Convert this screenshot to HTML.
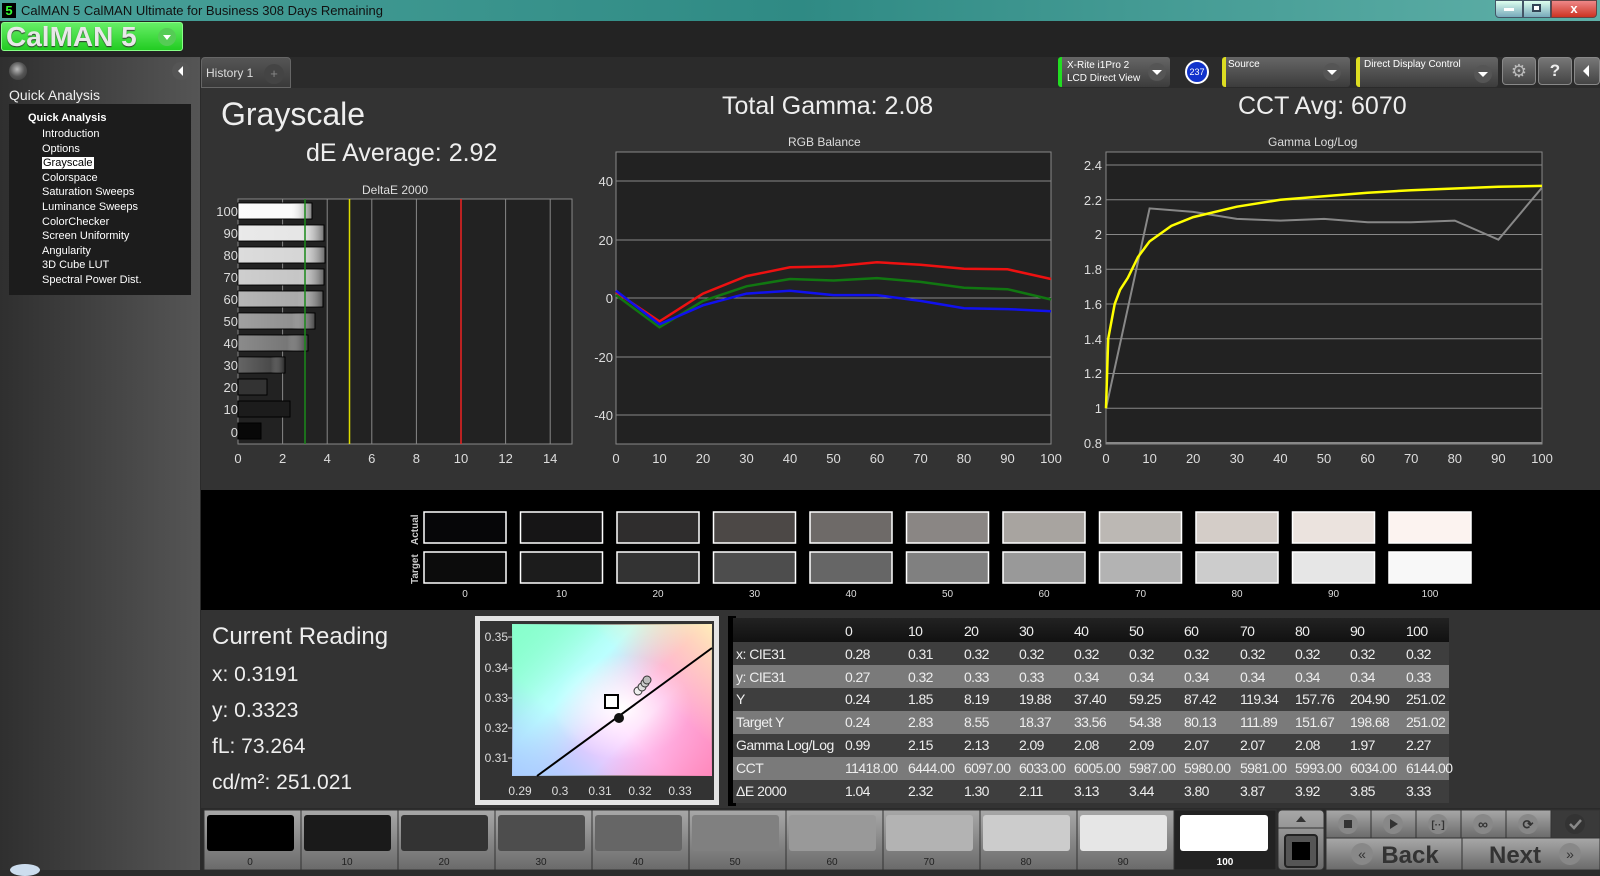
<!DOCTYPE html><html><head><meta charset="utf-8"><style>
*{margin:0;padding:0;box-sizing:border-box}
body{width:1600px;height:870px;overflow:hidden;background:#2b2b2b;font-family:"Liberation Sans",sans-serif;position:relative;color:#eee}
.a{position:absolute}
.t{white-space:nowrap}
</style></head><body>
<div class="a" style="left:0;top:0;width:1600px;height:21px;background:linear-gradient(90deg,#4aa29a,#2f8a84 50%,#5fb0a8)"></div>
<div class="a" style="left:2px;top:3px;width:14px;height:15px;background:#000;color:#3f3;font:bold 13px 'Liberation Sans';text-align:center;line-height:15px">5</div>
<div class="a t" style="left:21px;top:3px;font-size:13px;color:#111">CalMAN 5 CalMAN Ultimate for Business 308 Days Remaining</div>
<div class="a" style="left:1495px;top:0;width:28px;height:18px;background:linear-gradient(#dfe,#7ab);border:1px solid #456;border-radius:0 0 0 4px"></div>
<div class="a" style="left:1504px;top:8px;width:10px;height:3px;background:#fff"></div>
<div class="a" style="left:1523px;top:0;width:28px;height:18px;background:linear-gradient(#dfe,#7ab);border:1px solid #456"></div>
<div class="a" style="left:1532px;top:4px;width:9px;height:8px;border:2px solid #345;background:#fff"></div>
<div class="a" style="left:1551px;top:0;width:46px;height:18px;background:linear-gradient(#e88,#c32);border:1px solid #644;border-radius:0 0 4px 0;color:#fff;font:bold 13px sans-serif;text-align:center;line-height:16px">x</div>
<div class="a" style="left:0;top:21px;width:1600px;height:36px;background:#232323"></div>
<div class="a" style="left:1px;top:22px;width:182px;height:29px;background:linear-gradient(#6e6,#2c2);border-radius:3px;border:1px solid #8f8"></div>
<div class="a t" style="left:6px;top:21px;font:bold 28px 'Liberation Sans';color:#e8e8e8;text-shadow:0 1px 1px #333">CalMAN 5</div>
<div class="a" style="left:158px;top:28px;width:18px;height:18px;border-radius:50%;background:#5c5"></div>
<div class="a" style="left:163px;top:35px;border-left:4px solid transparent;border-right:4px solid transparent;border-top:5px solid #fff"></div>
<div class="a" style="left:0;top:57px;width:200px;height:813px;background:linear-gradient(90deg,#2f2f2f,#4a4a4a 70%,#555)"></div>
<div class="a" style="left:9px;top:62px;width:18px;height:18px;border-radius:50%;background:radial-gradient(circle at 45% 40%,#bbb,#555 50%,#333)"></div>
<div class="a" style="left:172px;top:62px;width:18px;height:18px;border-radius:50%;background:#555"></div>
<div class="a" style="left:178px;top:66px;border-top:5px solid transparent;border-bottom:5px solid transparent;border-right:5px solid #fff"></div>
<div class="a t" style="left:9px;top:87px;font-size:14px;color:#eee">Quick Analysis</div>
<div class="a" style="left:9px;top:104px;width:182px;height:191px;background:#1c1c1c"></div>
<div class="a t" style="left:28px;top:112px;font-size:11px;font-weight:bold;color:#fff">Quick Analysis</div>
<div class="a" style="left:42px;top:127px;font-size:11px;line-height:14.6px;color:#fff">Introduction<br>Options<br><span style="background:#fff;color:#000;padding:0 1px">Grayscale</span><br>Colorspace<br>Saturation Sweeps<br>Luminance Sweeps<br>ColorChecker<br>Screen Uniformity<br>Angularity<br>3D Cube LUT<br>Spectral Power Dist.</div>
<div class="a" style="left:201px;top:57px;width:90px;height:31px;background:linear-gradient(#555,#3a3a3a);border:1px solid #666;border-radius:4px 4px 0 0"></div>
<div class="a t" style="left:206px;top:66px;font-size:12px;color:#ddd">History 1</div>
<div class="a" style="left:264px;top:64px;width:20px;height:20px;border-radius:50%;background:#444;color:#888;font-size:13px;text-align:center;line-height:20px">+</div>
<div class="a" style="left:1058px;top:57px;width:112px;height:30px;background:linear-gradient(#666,#3c3c3c);border-left:4px solid #2d2;border-radius:3px"></div>
<div class="a t" style="left:1067px;top:59px;font-size:10px;line-height:13px;color:#fff">X-Rite i1Pro 2<br>LCD Direct View</div>
<div class="a" style="left:1148px;top:63px;width:18px;height:18px;border-radius:50%;background:#555"></div>
<div class="a" style="left:1152px;top:70px;border-left:5px solid transparent;border-right:5px solid transparent;border-top:5px solid #fff"></div>
<div class="a" style="left:1185px;top:60px;width:24px;height:24px;border-radius:50%;background:#13c;border:2px solid #fff;color:#fff;font-size:9px;text-align:center;line-height:20px">237</div>
<div class="a" style="left:1222px;top:57px;width:128px;height:30px;background:linear-gradient(#666,#3c3c3c);border-left:4px solid #dd2;border-radius:3px"></div>
<div class="a t" style="left:1228px;top:59px;font-size:10px;color:#fff">Source</div>
<div class="a" style="left:1323px;top:63px;width:18px;height:18px;border-radius:50%;background:#555"></div>
<div class="a" style="left:1327px;top:70px;border-left:5px solid transparent;border-right:5px solid transparent;border-top:5px solid #fff"></div>
<div class="a" style="left:1356px;top:57px;width:142px;height:30px;background:linear-gradient(#666,#3c3c3c);border-left:4px solid #dd2;border-radius:3px"></div>
<div class="a t" style="left:1364px;top:59px;font-size:10px;color:#fff">Direct Display Control</div>
<div class="a" style="left:1474px;top:65px;width:18px;height:18px;border-radius:50%;background:#555"></div>
<div class="a" style="left:1478px;top:72px;border-left:5px solid transparent;border-right:5px solid transparent;border-top:5px solid #fff"></div>
<div class="a" style="left:1502px;top:57px;width:34px;height:28px;background:linear-gradient(#777,#444);border:1px solid #888;border-radius:4px;color:#bbb;font-size:18px;text-align:center;line-height:26px">⚙</div>
<div class="a" style="left:1538px;top:57px;width:34px;height:28px;background:linear-gradient(#777,#444);border:1px solid #888;border-radius:4px;color:#eee;font:bold 17px sans-serif;text-align:center;line-height:26px">?</div>
<div class="a" style="left:1574px;top:57px;width:26px;height:28px;background:linear-gradient(#777,#444);border:1px solid #888;border-radius:4px"></div>
<div class="a" style="left:1583px;top:65px;border-top:6px solid transparent;border-bottom:6px solid transparent;border-right:6px solid #fff"></div>
<div class="a" style="left:201px;top:88px;width:1399px;height:402px;background:#333"></div>
<div class="a t" style="left:221px;top:96px;font-size:32px;color:#eee">Grayscale</div>
<div class="a t" style="left:306px;top:139px;font-size:25px;color:#eee">dE Average: 2.92</div>
<div class="a t" style="left:722px;top:92px;font-size:25px;color:#eee">Total Gamma: 2.08</div>
<div class="a t" style="left:1238px;top:92px;font-size:25px;color:#eee">CCT Avg: 6070</div>
<div class="a t" style="left:362px;top:183px;font-size:12px;color:#ddd">DeltaE 2000</div>
<div class="a t" style="left:788px;top:135px;font-size:12px;color:#ddd">RGB Balance</div>
<div class="a t" style="left:1268px;top:135px;font-size:12px;color:#ddd">Gamma Log/Log</div>
<svg class="a" style="left:0;top:0" width="1600" height="490" font-family="Liberation Sans" font-size="13" fill="#ddd">
<defs>
<linearGradient id="bg" x1="0" x2="1"><stop offset="0" stop-color="#fff" stop-opacity=".15"/><stop offset="0.7" stop-color="#fff" stop-opacity="0"/><stop offset="1" stop-color="#000" stop-opacity=".5"/></linearGradient>
</defs>
<rect x="238" y="199" width="334" height="245" fill="#222" stroke="#888"/>
<g stroke="#888"><line x1="282.6" y1="199" x2="282.6" y2="444"/><line x1="327.2" y1="199" x2="327.2" y2="444"/><line x1="371.8" y1="199" x2="371.8" y2="444"/><line x1="416.4" y1="199" x2="416.4" y2="444"/><line x1="505.6" y1="199" x2="505.6" y2="444"/><line x1="550.2" y1="199" x2="550.2" y2="444"/></g>
<g stroke="#000" stroke-width="1">
<rect x="238" y="203" width="74" height="16" fill="#fafafa"/>
<rect x="238" y="225" width="86" height="16" fill="#e6e6e6"/>
<rect x="238" y="247" width="87" height="16" fill="#d6d6d6"/>
<rect x="238" y="269" width="86" height="16" fill="#c6c6c6"/>
<rect x="238" y="291" width="85" height="16" fill="#aaa"/>
<rect x="238" y="313" width="77" height="16" fill="#909090"/>
<rect x="238" y="335" width="70" height="16" fill="#777"/>
<rect x="238" y="357" width="47" height="16" fill="#4a4a4a"/>
<rect x="238" y="379" width="29" height="16" fill="#333"/>
<rect x="238" y="401" width="52" height="16" fill="#1c1c1c"/>
<rect x="238" y="423" width="23" height="16" fill="#080808"/>
</g>
<g fill="url(#bg)"><rect x="238" y="203" width="74" height="16"/><rect x="238" y="225" width="86" height="16"/><rect x="238" y="247" width="87" height="16"/><rect x="238" y="269" width="86" height="16"/><rect x="238" y="291" width="85" height="16"/><rect x="238" y="313" width="77" height="16"/><rect x="238" y="335" width="70" height="16"/><rect x="238" y="357" width="47" height="16"/></g>
<line x1="305" y1="199" x2="305" y2="444" stroke="#1a8a1a" stroke-width="1.5"/>
<line x1="349.5" y1="199" x2="349.5" y2="444" stroke="#dd0" stroke-width="1.5"/>
<line x1="461" y1="199" x2="461" y2="444" stroke="#e22" stroke-width="1.5"/>
<g text-anchor="end"><text x="238" y="216">100</text><text x="238" y="238">90</text><text x="238" y="260">80</text><text x="238" y="282">70</text><text x="238" y="304">60</text><text x="238" y="326">50</text><text x="238" y="348">40</text><text x="238" y="370">30</text><text x="238" y="392">20</text><text x="238" y="414">10</text><text x="238" y="437">0</text></g>
<g text-anchor="middle"><text x="238" y="463">0</text><text x="282.6" y="463">2</text><text x="327.2" y="463">4</text><text x="371.8" y="463">6</text><text x="416.4" y="463">8</text><text x="461" y="463">10</text><text x="505.6" y="463">12</text><text x="550.2" y="463">14</text></g>
<rect x="616" y="152" width="435" height="292" fill="#222" stroke="#888"/>
<g stroke="#888"><line x1="616" y1="181" x2="1051" y2="181"/><line x1="616" y1="240" x2="1051" y2="240"/><line x1="616" y1="298" x2="1051" y2="298"/><line x1="616" y1="357" x2="1051" y2="357"/><line x1="616" y1="415" x2="1051" y2="415"/></g>
<g fill="none" stroke-width="2.5">
<polyline stroke="#e11" points="616,292.2 659.5,321.4 703,293.6 746.5,276.1 790,267.3 833.5,266.4 877,262.3 920.5,264.7 964,268.8 1007.5,269.3 1051,279"/>
<polyline stroke="#171" points="616,295.1 659.5,327.3 703,300.9 746.5,286.3 790,279 833.5,280.5 877,278.1 920.5,281.9 964,287.8 1007.5,289.2 1051,299.5"/>
<polyline stroke="#11e" points="616,290.7 659.5,324.3 703,305.3 746.5,293.6 790,290.7 833.5,295.1 877,295.1 920.5,300.9 964,308.2 1007.5,309.1 1051,311.2"/>
</g>
<g text-anchor="end"><text x="613" y="186">40</text><text x="613" y="245">20</text><text x="613" y="303">0</text><text x="613" y="362">-20</text><text x="613" y="420">-40</text></g>
<g text-anchor="middle"><text x="616" y="463">0</text><text x="659.5" y="463">10</text><text x="703" y="463">20</text><text x="746.5" y="463">30</text><text x="790" y="463">40</text><text x="833.5" y="463">50</text><text x="877" y="463">60</text><text x="920.5" y="463">70</text><text x="964" y="463">80</text><text x="1007.5" y="463">90</text><text x="1051" y="463">100</text></g>
<rect x="1106" y="152" width="436" height="292" fill="#222" stroke="#888"/>
<g stroke="#888"><line x1="1106" y1="165" x2="1542" y2="165"/><line x1="1106" y1="199.7" x2="1542" y2="199.7"/><line x1="1106" y1="234.5" x2="1542" y2="234.5"/><line x1="1106" y1="269.3" x2="1542" y2="269.3"/><line x1="1106" y1="304" x2="1542" y2="304"/><line x1="1106" y1="338.8" x2="1542" y2="338.8"/><line x1="1106" y1="373.5" x2="1542" y2="373.5"/><line x1="1106" y1="408.3" x2="1542" y2="408.3"/><line x1="1106" y1="443" x2="1542" y2="443" stroke-width="2"/></g>
<polyline fill="none" stroke="#888" stroke-width="2" points="1106,408.3 1149.6,208.4 1193.2,211.9 1236.8,218.9 1280.4,220.6 1324,218.9 1367.6,222.3 1411.2,222.3 1454.8,220.6 1498.4,239.7 1542,187.6"/>
<polyline fill="none" stroke="#ff0" stroke-width="2.5" points="1106,408.3 1108.2,338.8 1114.7,304 1120,290 1127.8,277.9 1138,257 1149.6,241.4 1171.4,225.8 1193.2,217.1 1236.8,206.7 1280.4,199.8 1324,196.3 1367.6,192.8 1411.2,190.2 1454.8,188.5 1498.4,186.7 1542,185.9"/>
<g text-anchor="end"><text x="1102" y="170">2.4</text><text x="1102" y="205">2.2</text><text x="1102" y="239">2</text><text x="1102" y="274">1.8</text><text x="1102" y="309">1.6</text><text x="1102" y="344">1.4</text><text x="1102" y="378">1.2</text><text x="1102" y="413">1</text><text x="1102" y="448">0.8</text></g>
<g text-anchor="middle"><text x="1106" y="463">0</text><text x="1149.6" y="463">10</text><text x="1193.2" y="463">20</text><text x="1236.8" y="463">30</text><text x="1280.4" y="463">40</text><text x="1324" y="463">50</text><text x="1367.6" y="463">60</text><text x="1411.2" y="463">70</text><text x="1454.8" y="463">80</text><text x="1498.4" y="463">90</text><text x="1542" y="463">100</text></g>
</svg>
<div class="a" style="left:201px;top:490px;width:1399px;height:120px;background:#000"></div>
<div class="a t" style="left:410px;top:545px;font-size:10px;font-weight:bold;color:#ccc;transform:rotate(-90deg);transform-origin:0 0">Actual</div>
<div class="a t" style="left:410px;top:584px;font-size:10px;font-weight:bold;color:#ccc;transform:rotate(-90deg);transform-origin:0 0">Target</div>
<svg class="a" style="left:0;top:490px" width="1600" height="120" font-family="Liberation Sans" font-size="10" fill="#ddd" text-anchor="middle">
<g stroke="#fff" stroke-width="1.5">
<rect x="424" y="22" width="82" height="31" fill="#060608"/><rect x="424" y="62" width="82" height="31" fill="#0c0c0c"/>
<rect x="520.5" y="22" width="82" height="31" fill="#161516"/><rect x="520.5" y="62" width="82" height="31" fill="#1c1c1c"/>
<rect x="617" y="22" width="82" height="31" fill="#2f2d2d"/><rect x="617" y="62" width="82" height="31" fill="#333"/>
<rect x="713.5" y="22" width="82" height="31" fill="#4c4846"/><rect x="713.5" y="62" width="82" height="31" fill="#4d4d4d"/>
<rect x="810" y="22" width="82" height="31" fill="#6e6a68"/><rect x="810" y="62" width="82" height="31" fill="#666"/>
<rect x="906.5" y="22" width="82" height="31" fill="#8a8684"/><rect x="906.5" y="62" width="82" height="31" fill="#808080"/>
<rect x="1003" y="22" width="82" height="31" fill="#a8a4a0"/><rect x="1003" y="62" width="82" height="31" fill="#999"/>
<rect x="1099.5" y="22" width="82" height="31" fill="#bcb8b4"/><rect x="1099.5" y="62" width="82" height="31" fill="#b3b3b3"/>
<rect x="1196" y="22" width="82" height="31" fill="#d4cdc8"/><rect x="1196" y="62" width="82" height="31" fill="#ccc"/>
<rect x="1292.5" y="22" width="82" height="31" fill="#ebe3de"/><rect x="1292.5" y="62" width="82" height="31" fill="#e6e6e6"/>
<rect x="1389" y="22" width="82" height="31" fill="#fcf3f0"/><rect x="1389" y="62" width="82" height="31" fill="#f8f8f8"/>
</g>
<text x="465" y="107">0</text><text x="561.5" y="107">10</text><text x="658" y="107">20</text><text x="754.5" y="107">30</text><text x="851" y="107">40</text><text x="947.5" y="107">50</text><text x="1044" y="107">60</text><text x="1140.5" y="107">70</text><text x="1237" y="107">80</text><text x="1333.5" y="107">90</text><text x="1430" y="107">100</text>
</svg>
<div class="a" style="left:201px;top:610px;width:1399px;height:198px;background:#333"></div>
<div class="a t" style="left:212px;top:623px;font-size:24px;color:#eee">Current Reading</div>
<div class="a t" style="left:212px;top:657px;font-size:21px;line-height:36px;color:#eee">x: 0.3191<br>y: 0.3323<br>fL: 73.264<br>cd/m²: 251.021</div>
<div class="a" style="left:475px;top:616px;width:244px;height:189px;background:#333;border:5px solid #e4e4e4"></div>
<div class="a" style="left:512px;top:624px;width:200px;height:152px;border:1px solid #888;background:radial-gradient(ellipse at 55% 55%,#fff 0,rgba(255,255,255,0) 45%),linear-gradient(135deg,#8fc 0%,#bff 35%,rgba(255,255,255,0) 55%),linear-gradient(45deg,#acf 0%,#fcf 45%,#f8b 100%),linear-gradient(#fea,#fdd)"></div>
<div class="a" style="left:512px;top:624px;width:200px;height:152px;background:linear-gradient(225deg,#feb 0%,rgba(255,240,200,0) 35%),linear-gradient(315deg,#f8b 0%,rgba(255,140,180,0) 35%),linear-gradient(45deg,#acf 0%,rgba(170,200,255,0) 30%),linear-gradient(135deg,#8fc 0%,rgba(140,255,200,0) 30%)"></div>
<svg class="a" style="left:475px;top:616px" width="244" height="189" font-family="Liberation Sans" font-size="12" fill="#ddd">
<line x1="62" y1="160" x2="237" y2="32" stroke="#000" stroke-width="2"/>
<rect x="130" y="79" width="13" height="13" fill="#fff" stroke="#000" stroke-width="2"/>
<circle cx="144" cy="102" r="5" fill="#111"/>
<g stroke="#333" fill="#eee"><circle cx="163" cy="75" r="4"/><circle cx="167" cy="71" r="4" fill="#ddd"/><circle cx="170" cy="67" r="4" fill="#ccc"/><circle cx="172" cy="64" r="4" fill="#bbb"/></g>
<g stroke="#ccc"><line x1="33" y1="21" x2="37" y2="21"/><line x1="33" y1="52" x2="37" y2="52"/><line x1="33" y1="82" x2="37" y2="82"/><line x1="33" y1="112" x2="37" y2="112"/><line x1="33" y1="142" x2="37" y2="142"/></g>
<g text-anchor="end"><text x="33" y="25">0.35</text><text x="33" y="56">0.34</text><text x="33" y="86">0.33</text><text x="33" y="116">0.32</text><text x="33" y="146">0.31</text></g>
<g text-anchor="middle"><text x="45" y="179">0.29</text><text x="85" y="179">0.3</text><text x="125" y="179">0.31</text><text x="165" y="179">0.32</text><text x="205" y="179">0.33</text></g>
</svg>
<div class="a" style="left:728px;top:616px;width:8px;height:190px;background:#000"></div>
<div class="a" style="left:733px;top:618px;width:716px;height:189px;color:#eee">
<div style="height:24px;background:linear-gradient(#222,#111)"></div>
<div style="height:23px;background:#3e3e3e"></div><div style="height:23px;background:#7a7a7a"></div><div style="height:23px;background:#3e3e3e"></div><div style="height:23px;background:#7a7a7a"></div><div style="height:23px;background:#3e3e3e"></div><div style="height:23px;background:#7a7a7a"></div><div style="height:23px;background:#3e3e3e"></div>
</div>
<div class="a t" style="left:736px;top:620px;font-size:14px;line-height:22.8px;letter-spacing:-0.5px;color:#eee">&nbsp;<br>x: CIE31<br>y: CIE31<br>Y<br>Target Y<br>Gamma Log/Log<br>CCT<br>ΔE 2000</div>
<div class="a t" style="left:845px;top:620px;font-size:14px;line-height:22.8px;letter-spacing:-0.6px;color:#eee">0<br>0.28<br>0.27<br>0.24<br>0.24<br>0.99<br>11418.00<br>1.04</div>
<div class="a t" style="left:908px;top:620px;font-size:14px;line-height:22.8px;letter-spacing:-0.6px;color:#eee">10<br>0.31<br>0.32<br>1.85<br>2.83<br>2.15<br>6444.00<br>2.32</div>
<div class="a t" style="left:964px;top:620px;font-size:14px;line-height:22.8px;letter-spacing:-0.6px;color:#eee">20<br>0.32<br>0.33<br>8.19<br>8.55<br>2.13<br>6097.00<br>1.30</div>
<div class="a t" style="left:1019px;top:620px;font-size:14px;line-height:22.8px;letter-spacing:-0.6px;color:#eee">30<br>0.32<br>0.33<br>19.88<br>18.37<br>2.09<br>6033.00<br>2.11</div>
<div class="a t" style="left:1074px;top:620px;font-size:14px;line-height:22.8px;letter-spacing:-0.6px;color:#eee">40<br>0.32<br>0.34<br>37.40<br>33.56<br>2.08<br>6005.00<br>3.13</div>
<div class="a t" style="left:1129px;top:620px;font-size:14px;line-height:22.8px;letter-spacing:-0.6px;color:#eee">50<br>0.32<br>0.34<br>59.25<br>54.38<br>2.09<br>5987.00<br>3.44</div>
<div class="a t" style="left:1184px;top:620px;font-size:14px;line-height:22.8px;letter-spacing:-0.6px;color:#eee">60<br>0.32<br>0.34<br>87.42<br>80.13<br>2.07<br>5980.00<br>3.80</div>
<div class="a t" style="left:1240px;top:620px;font-size:14px;line-height:22.8px;letter-spacing:-0.6px;color:#eee">70<br>0.32<br>0.34<br>119.34<br>111.89<br>2.07<br>5981.00<br>3.87</div>
<div class="a t" style="left:1295px;top:620px;font-size:14px;line-height:22.8px;letter-spacing:-0.6px;color:#eee">80<br>0.32<br>0.34<br>157.76<br>151.67<br>2.08<br>5993.00<br>3.92</div>
<div class="a t" style="left:1350px;top:620px;font-size:14px;line-height:22.8px;letter-spacing:-0.6px;color:#eee">90<br>0.32<br>0.34<br>204.90<br>198.68<br>1.97<br>6034.00<br>3.85</div>
<div class="a t" style="left:1406px;top:620px;font-size:14px;line-height:22.8px;letter-spacing:-0.6px;color:#eee">100<br>0.32<br>0.33<br>251.02<br>251.02<br>2.27<br>6144.00<br>3.33</div>
<div class="a" style="left:201px;top:808px;width:1399px;height:62px;background:#2a2a2a"></div>
<svg class="a" style="left:0;top:808px" width="1600" height="62" font-family="Liberation Sans" font-size="10" fill="#222" text-anchor="middle">
<defs><linearGradient id="bb" x1="0" y1="0" x2="0" y2="1"><stop offset="0" stop-color="#a8a8a8"/><stop offset="1" stop-color="#6a6a6a"/></linearGradient></defs>
<g stroke="#333">
<rect x="204" y="2" width="97" height="60" fill="url(#bb)"/><rect x="301" y="2" width="97" height="60" fill="url(#bb)"/><rect x="398" y="2" width="97" height="60" fill="url(#bb)"/><rect x="495" y="2" width="97" height="60" fill="url(#bb)"/><rect x="592" y="2" width="97" height="60" fill="url(#bb)"/><rect x="689" y="2" width="97" height="60" fill="url(#bb)"/><rect x="786" y="2" width="97" height="60" fill="url(#bb)"/><rect x="883" y="2" width="97" height="60" fill="url(#bb)"/><rect x="980" y="2" width="97" height="60" fill="url(#bb)"/><rect x="1077" y="2" width="97" height="60" fill="url(#bb)"/><rect x="1174" y="2" width="102" height="60" fill="#222"/>
</g>
<g>
<rect x="207" y="7" width="87" height="36" rx="3" fill="#000"/><rect x="304" y="7" width="87" height="36" rx="3" fill="#1a1a1a"/><rect x="401" y="7" width="87" height="36" rx="3" fill="#333"/><rect x="498" y="7" width="87" height="36" rx="3" fill="#4d4d4d"/><rect x="595" y="7" width="87" height="36" rx="3" fill="#666"/><rect x="692" y="7" width="87" height="36" rx="3" fill="#808080"/><rect x="789" y="7" width="87" height="36" rx="3" fill="#999"/><rect x="886" y="7" width="87" height="36" rx="3" fill="#b3b3b3"/><rect x="983" y="7" width="87" height="36" rx="3" fill="#ccc"/><rect x="1080" y="7" width="87" height="36" rx="3" fill="#e6e6e6"/><rect x="1180" y="7" width="88" height="36" rx="3" fill="#fff"/>
</g>
<text x="250" y="57">0</text><text x="347" y="57">10</text><text x="444" y="57">20</text><text x="541" y="57">30</text><text x="638" y="57">40</text><text x="735" y="57">50</text><text x="832" y="57">60</text><text x="929" y="57">70</text><text x="1026" y="57">80</text><text x="1123" y="57">90</text><text x="1225" y="57" fill="#fff" font-weight="bold">100</text>
<rect x="1277" y="0" width="323" height="62" fill="#2a2a2a"/>
<rect x="1278" y="2" width="46" height="60" rx="4" fill="url(#bb)" stroke="#333"/>
<line x1="1278" y1="20" x2="1324" y2="20" stroke="#333"/>
<path d="M1296 14 L1301 8 L1306 14Z" fill="#333"/>
<rect x="1285" y="27" width="32" height="32" rx="3" fill="#555" stroke="#222" stroke-width="2"/>
<rect x="1292" y="34" width="18" height="18" fill="#000"/>
<g stroke="#333"><rect x="1326" y="2" width="45" height="28" fill="url(#bb)"/><rect x="1371" y="2" width="45" height="28" fill="url(#bb)"/><rect x="1416" y="2" width="45" height="28" fill="url(#bb)"/><rect x="1461" y="2" width="45" height="28" fill="url(#bb)"/><rect x="1506" y="2" width="45" height="28" fill="url(#bb)"/><rect x="1551" y="2" width="49" height="28" fill="#3a3a3a"/>
<rect x="1326" y="30" width="136" height="32" fill="url(#bb)"/><rect x="1462" y="30" width="138" height="32" fill="url(#bb)"/></g>
<g fill="#888"><circle cx="1348" cy="16" r="10"/><circle cx="1393" cy="16" r="10"/><circle cx="1438" cy="16" r="10"/><circle cx="1483" cy="16" r="10"/><circle cx="1528" cy="16" r="10"/><circle cx="1575" cy="16" r="10" fill="#333"/><circle cx="1362" cy="46" r="11"/><circle cx="1570" cy="46" r="11"/></g>
<rect x="1344" y="12" width="8" height="8" fill="#333"/>
<path d="M1390 11 L1398 16 L1390 21Z" fill="#333"/>
<text x="1438" y="20" font-size="10" fill="#333" font-weight="bold">[··]</text>
<text x="1483" y="21" font-size="14" fill="#333" font-weight="bold">∞</text>
<text x="1528" y="21" font-size="13" fill="#333" font-weight="bold">⟳</text>
<path d="M1570 16 l4 4 l7 -8" stroke="#888" stroke-width="2.5" fill="none"/>
<text x="1362" y="51" font-size="14" fill="#333">«</text>
<text x="1570" y="51" font-size="14" fill="#333">»</text>
<text x="1410" y="55" font-size="24" fill="#333" font-weight="bold">Back</text>
<text x="1515" y="55" font-size="24" fill="#333" font-weight="bold">Next</text>
</svg>
<div class="a" style="left:10px;top:864px;width:30px;height:12px;border-radius:50%;background:#cde"></div>
</body></html>
